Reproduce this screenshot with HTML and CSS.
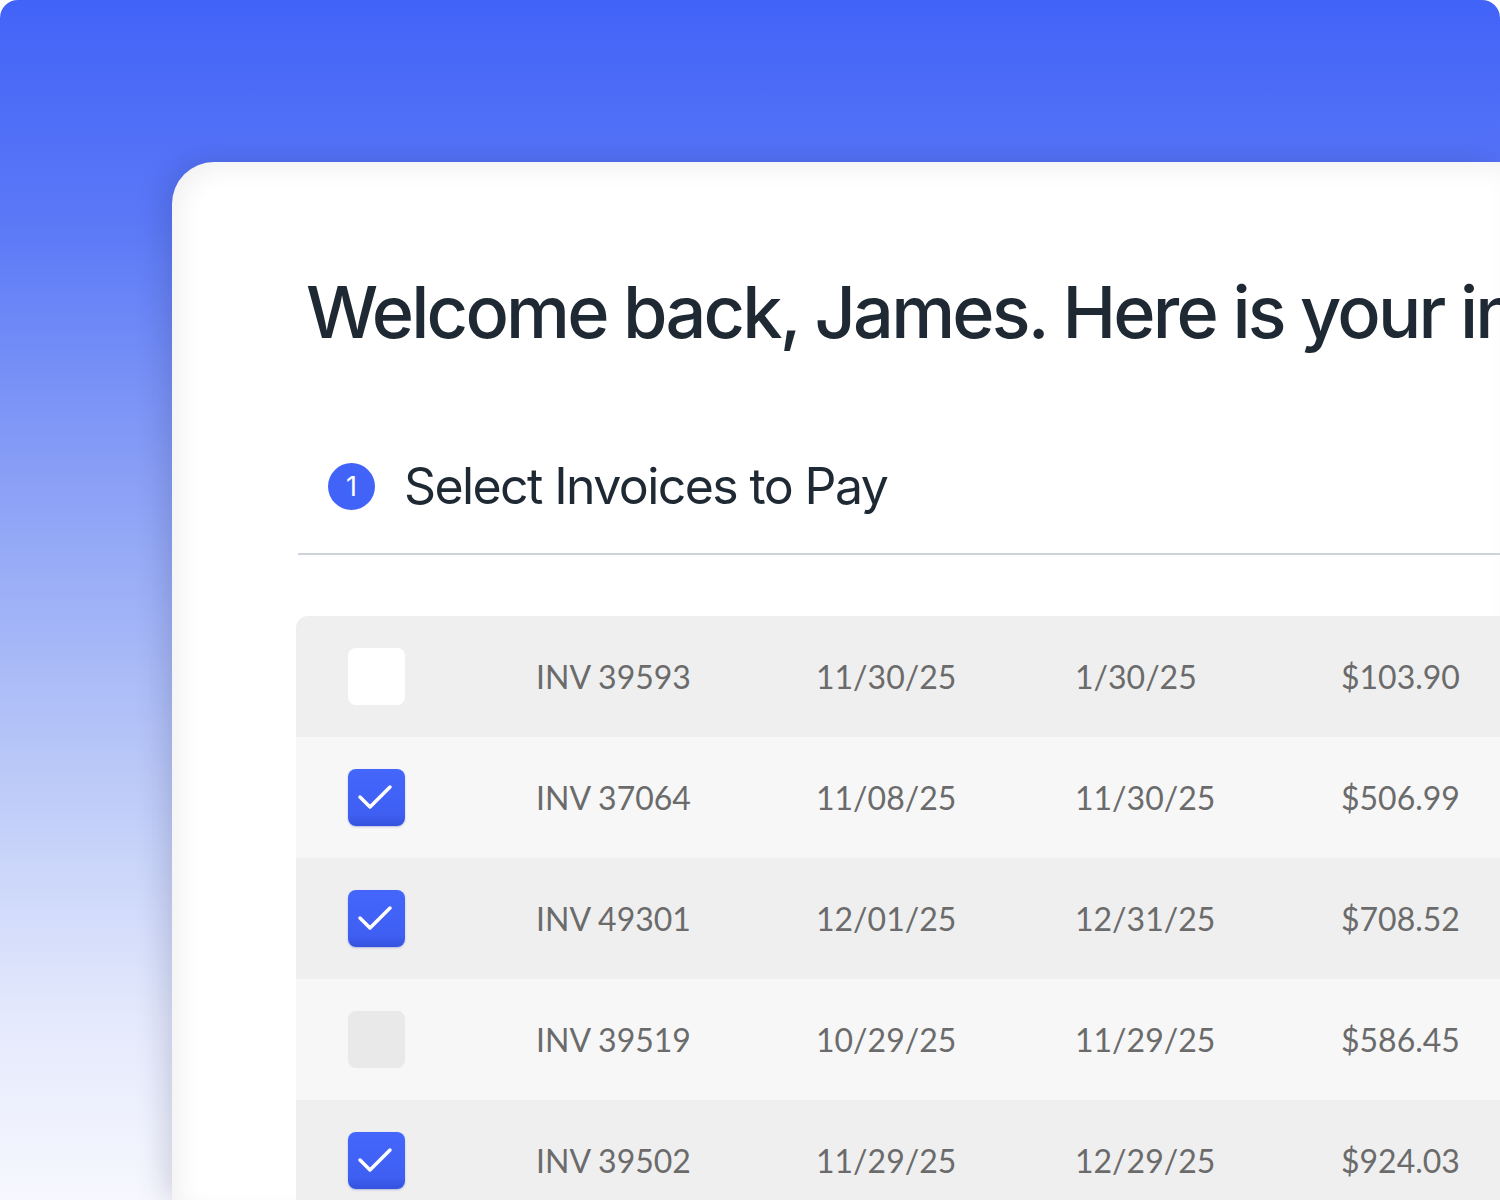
FILE: index.html
```html
<!DOCTYPE html>
<html>
  <head>
    <meta charset='UTF-8'>
    <title>Invoices</title>
    <link rel="stylesheet" href="styles.css">
  </head>
  <body>
    <div class='stage'>
      <div class='card'>
        <div class='card__title'>Welcome back, James. Here is your invoice summary</div>
        <div class='step'>
          <div class='step__num'>1</div>
          <div class='step__label'>Select Invoices to Pay</div>
        </div>
        <div class='step__rule'></div>
        <div class='table'>
          <div class='table__row'>
            <div class='row__check'><span class='check'></span></div>
            <div class='row__cell cell--inv'>INV 39593</div>
            <div class='row__cell cell--date'>11/30/25</div>
            <div class='row__cell cell--due'>1/30/25</div>
            <div class='row__cell cell--amt'>$103.90</div>
          </div>
          <div class='table__row'>
            <div class='row__check'>
              <span class='check check--on'>
                <svg width='57' height='57' viewBox='0 0 57 57'><polyline points='12,28 22,38 42,18' fill='none' stroke='#fff' stroke-width='3.5' stroke-linecap='round' stroke-linejoin='round'/></svg>
              </span>
            </div>
            <div class='row__cell cell--inv'>INV 37064</div>
            <div class='row__cell cell--date'>11/08/25</div>
            <div class='row__cell cell--due'>11/30/25</div>
            <div class='row__cell cell--amt'>$506.99</div>
          </div>
          <div class='table__row'>
            <div class='row__check'>
              <span class='check check--on'>
                <svg width='57' height='57' viewBox='0 0 57 57'><polyline points='12,28 22,38 42,18' fill='none' stroke='#fff' stroke-width='3.5' stroke-linecap='round' stroke-linejoin='round'/></svg>
              </span>
            </div>
            <div class='row__cell cell--inv'>INV 49301</div>
            <div class='row__cell cell--date'>12/01/25</div>
            <div class='row__cell cell--due'>12/31/25</div>
            <div class='row__cell cell--amt'>$708.52</div>
          </div>
          <div class='table__row'>
            <div class='row__check'><span class='check check--muted'></span></div>
            <div class='row__cell cell--inv'>INV 39519</div>
            <div class='row__cell cell--date'>10/29/25</div>
            <div class='row__cell cell--due'>11/29/25</div>
            <div class='row__cell cell--amt'>$586.45</div>
          </div>
          <div class='table__row'>
            <div class='row__check'>
              <span class='check check--on'>
                <svg width='57' height='57' viewBox='0 0 57 57'><polyline points='12,28 22,38 42,18' fill='none' stroke='#fff' stroke-width='3.5' stroke-linecap='round' stroke-linejoin='round'/></svg>
              </span>
            </div>
            <div class='row__cell cell--inv'>INV 39502</div>
            <div class='row__cell cell--date'>11/29/25</div>
            <div class='row__cell cell--due'>12/29/25</div>
            <div class='row__cell cell--amt'>$924.03</div>
          </div>
        </div>
      </div>
    </div>
  </body>
</html>
```

FILE: styles.css
```css
html, body {
  margin: 0;
  background: #fff;
  font-family: Inter, 'Noto Sans', sans-serif;
}

.stage {
  height: 1200px;
  padding: 162px 0 0 172px;
  box-sizing: border-box;
  border-radius: 18px 18px 0 0;
  overflow: hidden;
  background: linear-gradient(180deg, #4263f8 0%, #5a78f7 18%, #8aa0f6 40%, #bccaf8 65%, #e4e9fc 85%, #f7f8fe 100%);
}

.card {
  height: 100%;
  padding: 0 0 0 124px;
  background: #fff;
  border-radius: 42px 0 0 0;
  box-shadow: -6px 0 30px rgba(20, 30, 80, 0.18), inset 10px 8px 22px rgba(0, 0, 0, 0.05);
  overflow: hidden;
}

.card__title {
  padding: 105px 0 0 10px;
  height: 90px;
  font-size: 72px;
  font-weight: 500;
  letter-spacing: -2.8px;
  line-height: 90px;
  color: #1f2933;
  white-space: nowrap;
}

.step {
  display: flex;
  align-items: center;
  margin-top: 99px;
  padding-left: 32px;
  height: 60px;
}

.step__num {
  width: 47px;
  height: 47px;
  border-radius: 50%;
  background: #4263f8;
  color: #fff;
  font-size: 27px;
  line-height: 47px;
  text-align: center;
}

.step__label {
  margin-left: 29px;
  font-size: 50px;
  font-weight: 400;
  letter-spacing: -1.6px;
  color: #1f2933;
  white-space: nowrap;
}

.step__rule {
  margin: 37px 0 0 2px;
  height: 2px;
  background: #cdd3da;
}

.table {
  margin-top: 61px;
  border-radius: 12px 0 0 0;
  overflow: hidden;
}

.table__row {
  display: flex;
  align-items: center;
  height: 121px;
  background: #efefef;
  font-family: Lato, 'Noto Sans', sans-serif;
  font-size: 32px;
  color: #6b6b6b;
  white-space: nowrap;
}

.table__row:nth-child(even) {
  background: #f7f7f7;
}

.table__row > div {
  flex-shrink: 0;
}

.row__check {
  width: 240px;
  padding-left: 52px;
  box-sizing: border-box;
}

.check {
  display: block;
  width: 57px;
  height: 57px;
  border-radius: 8px;
  background: #fff;
}

.check--muted {
  background: #e9e9e9;
}

.check--on {
  background: linear-gradient(180deg, #4466fa 0%, #3f5ff3 80%, #3452de 100%);
  box-shadow: 0 1px 2px rgba(40, 60, 180, 0.3);
}

.check--on svg {
  display: block;
}

.cell--inv { width: 280px; }
.cell--date { width: 259px; }
.cell--due { width: 266px; }
.cell--amt { width: 200px; }
```
